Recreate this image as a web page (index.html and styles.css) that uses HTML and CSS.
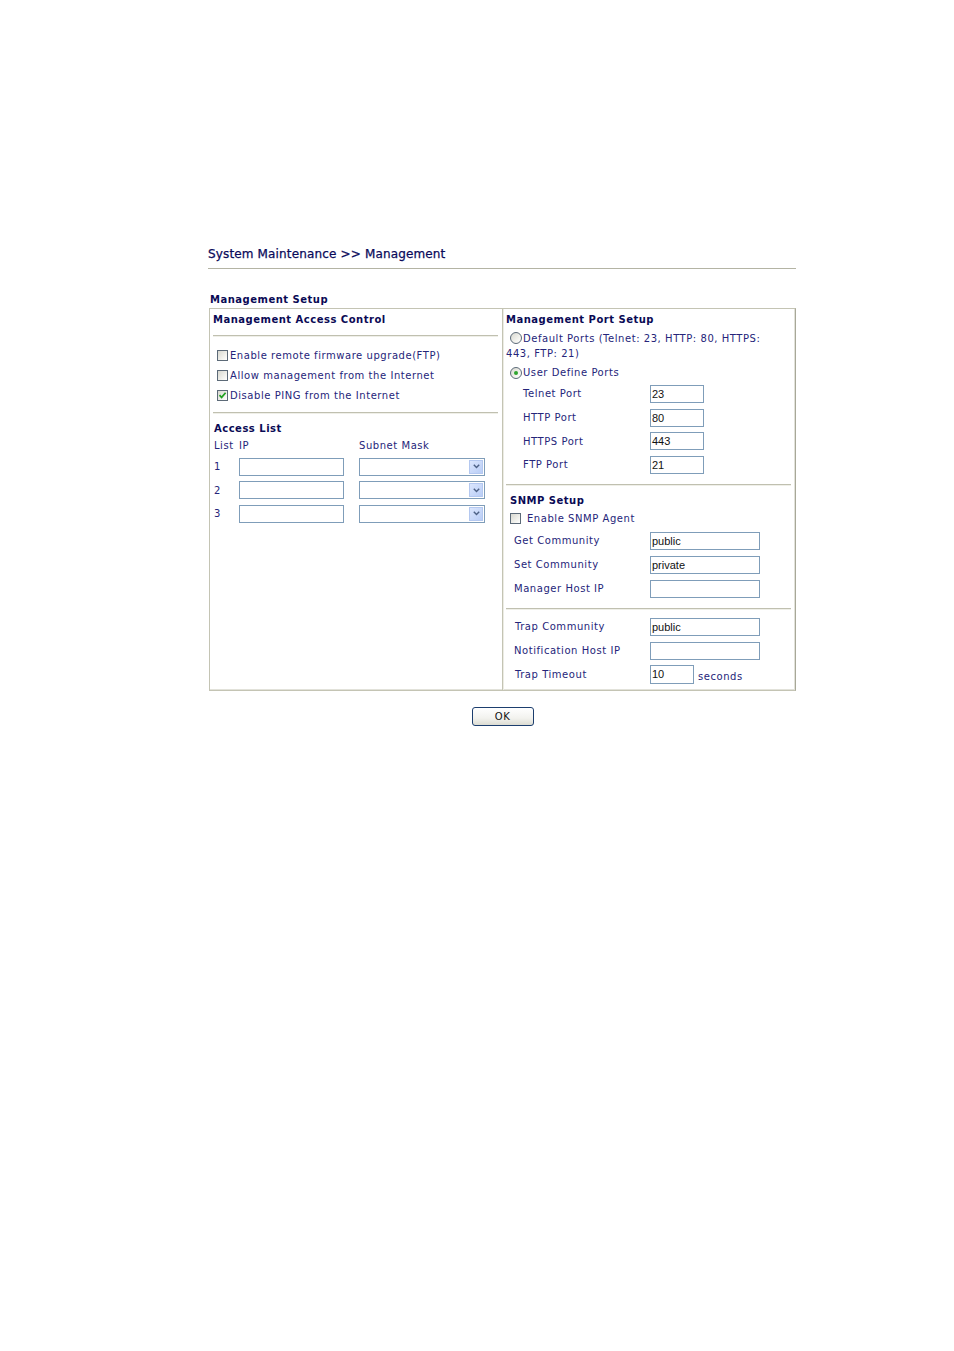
FILE: index.html
```html
<!DOCTYPE html>
<html>
<head>
<meta charset="utf-8">
<link rel="stylesheet" href="styles.css">
</head>
<body>
<div class="page">
  <div class="title">System Maintenance &gt;&gt; Management</div>
  <div class="section-title">Management Setup</div>
  <div class="box">
    <div class="col left">
      <div class="head">Management Access Control</div>
      <div class="hr hr1"></div>
      <div class="checks">
        <label class="crow"><span class="cb"></span>Enable remote firmware upgrade(FTP)</label>
        <label class="crow"><span class="cb"></span>Allow management from the Internet</label>
        <label class="crow"><span class="cb checked"><svg viewBox="0 0 9 9" width="9" height="9"><path d="M1.5 4.2 L3.6 6.4 L7.6 1.8" fill="none" stroke="#21a121" stroke-width="1.7"/></svg></span>Disable PING from the Internet</label>
      </div>
      <div class="hr hr2"></div>
      <div class="head al">Access List</div>
      <div class="alhead"><span class="c1">List</span><span class="c2">IP</span><span class="c3">Subnet Mask</span></div>
      <div class="alrow"><span class="c1">1</span><span class="inp ipw"></span><span class="sel"><span class="arr"><svg viewBox="0 0 7 5" width="7" height="5"><path d="M0.8 0.8 L3.5 3.6 L6.2 0.8" fill="none" stroke="#4d6185" stroke-width="1.4"/></svg></span></span></div>
      <div class="alrow"><span class="c1">2</span><span class="inp ipw"></span><span class="sel"><span class="arr"><svg viewBox="0 0 7 5" width="7" height="5"><path d="M0.8 0.8 L3.5 3.6 L6.2 0.8" fill="none" stroke="#4d6185" stroke-width="1.4"/></svg></span></span></div>
      <div class="alrow"><span class="c1">3</span><span class="inp ipw"></span><span class="sel"><span class="arr"><svg viewBox="0 0 7 5" width="7" height="5"><path d="M0.8 0.8 L3.5 3.6 L6.2 0.8" fill="none" stroke="#4d6185" stroke-width="1.4"/></svg></span></span></div>
    </div>
    <div class="col right">
      <div class="head">Management Port Setup</div>
      <div class="radio-text"><span class="rb"></span>Default Ports (Telnet: 23, HTTP: 80, HTTPS: 443, FTP: 21)</div>
      <div class="radio-row"><span class="rb on"><span class="dot"></span></span>User Define Ports</div>
      <div class="prow"><span class="plabel">Telnet Port</span><span class="inp pw">23</span></div>
      <div class="prow"><span class="plabel">HTTP Port</span><span class="inp pw">80</span></div>
      <div class="prow"><span class="plabel">HTTPS Port</span><span class="inp pw">443</span></div>
      <div class="prow"><span class="plabel">FTP Port</span><span class="inp pw">21</span></div>
      <div class="hr hr3"></div>
      <div class="head snmp">SNMP Setup</div>
      <label class="srow"><span class="cb"></span>Enable SNMP Agent</label>
      <div class="frow"><span class="flabel">Get Community</span><span class="inp fw">public</span></div>
      <div class="frow"><span class="flabel">Set Community</span><span class="inp fw">private</span></div>
      <div class="frow"><span class="flabel">Manager Host IP</span><span class="inp fw"></span></div>
      <div class="hr hr4"></div>
      <div class="frow t1"><span class="flabel tl">Trap Community</span><span class="inp fw">public</span></div>
      <div class="frow"><span class="flabel">Notification Host IP</span><span class="inp fw"></span></div>
      <div class="frow"><span class="flabel tl">Trap Timeout</span><span class="inp tw">10</span><span class="sec">seconds</span></div>
    </div>
  </div>
  <div class="btns"><button class="ok">OK</button></div>
</div>
</body>
</html>
```
FILE: styles.css
```css
html, body {
  margin: 0;
  padding: 0;
  background: #ffffff;
}
body {
  font-family: "DejaVu Sans", Verdana, sans-serif;
  font-size: 10px;
  letter-spacing: 0.55px;
  color: #25257a;
}
.page {
  margin-left: 208px;
  padding-top: 247px;
  width: 588px;
}
.title {
  font-size: 12px;
  line-height: 15px;
  letter-spacing: 0.15px;
  color: #0a0a5a;
  padding-bottom: 6px;
  border-bottom: 1px solid #b4b4a4;
  -webkit-text-stroke: 0.25px #0a0a5a;
}
.section-title {
  margin-top: 23px;
  padding-left: 2px;
  font-weight: bold;
  letter-spacing: 0.5px;
  line-height: 16px;
  color: #0a0a55;
}
.box {
  margin-left: 1px;
  width: 587px;
  height: 383px;
  box-sizing: border-box;
  border: 1px solid #c4c4b4;
  border-right-color: #a8a898;
  box-shadow: inset -1px -1px 0 #e2e2da;
  display: grid;
  grid-template-columns: 293px 1fr;
}
.col {
  padding-top: 3px;
}
.left {
  padding-left: 3px;
  padding-right: 4px;
  border-right: 1px solid #c4c4b4;
}
.right {
  padding-left: 3px;
  padding-right: 4px;
  box-shadow: inset 1px 0 0 #ecece4;
}
.head {
  font-weight: bold;
  letter-spacing: 0.5px;
  line-height: 16px;
  color: #0a0a55;
}
.hr {
  height: 1px;
  background: #c0c0b0;
  box-shadow: 0 1px 0 #efefe8;
}
.hr1 { margin-top: 7px; }
.checks { margin-top: 9px; padding-left: 4px; }
.crow {
  display: flex;
  align-items: center;
  height: 20px;
}
.cb {
  display: inline-flex;
  align-items: center;
  justify-content: center;
  flex: none;
  width: 11px;
  height: 11px;
  box-sizing: border-box;
  border: 1px solid #5c6a78;
  background: linear-gradient(135deg, #d8d8d0 0%, #f4f4f0 70%, #ffffff 100%);
  margin-right: 2px;
}
.hr2 { margin-top: 7px; }
.al { margin-top: 8px; line-height: 16px; padding-left: 1px; }
.alhead {
  display: flex;
  line-height: 17px;
  padding-left: 1px;
}
.c1 { width: 25px; }
.c2 { width: 120px; }
.alrow {
  display: flex;
  align-items: center;
  height: 23.5px;
  padding-left: 1px;
}
.alhead + .alrow { margin-top: 1px; }
.inp {
  display: inline-block;
  flex: none;
  box-sizing: border-box;
  height: 18px;
  border: 1px solid #7f9db9;
  background: #fff;
  font-family: "Liberation Sans", Arial, sans-serif;
  font-size: 11px;
  letter-spacing: 0;
  line-height: 16px;
  color: #111;
  padding-left: 1px;
}
.ipw { width: 105px; }
.sel {
  margin-left: 15px;
  width: 126px;
  height: 18px;
  box-sizing: border-box;
  border: 1px solid #7f9db9;
  background: #fff;
  display: flex;
  justify-content: flex-end;
  align-items: center;
  padding-right: 1px;
}
.arr {
  width: 14px;
  height: 14px;
  box-sizing: border-box;
  border: 1px solid #b4c8f0;
  background: linear-gradient(135deg, #dbe6fd 0%, #b9cdf6 100%);
  display: flex;
  align-items: center;
  justify-content: center;
}
.radio-text {
  margin-top: 3px;
  padding-right: 14px;
  line-height: 15px;
}
.rb {
  display: inline-flex;
  align-items: center;
  justify-content: center;
  flex: none;
  vertical-align: -2px;
  width: 12px;
  height: 12px;
  box-sizing: border-box;
  border: 1px solid #5c6a78;
  border-radius: 50%;
  background: linear-gradient(135deg, #d8d8d0 0%, #f6f6f2 70%, #ffffff 100%);
  margin-left: 4px;
  margin-right: 1px;
}
.rb .dot {
  width: 4px;
  height: 4px;
  border-radius: 50%;
  background: #2fa52f;
}
.radio-row {
  display: flex;
  align-items: center;
  margin-top: 4px;
  height: 15px;
  line-height: 15px;
}
.prow {
  display: flex;
  align-items: center;
  height: 23.7px;
  padding-left: 17px;
}
.radio-row + .prow { margin-top: 2px; }
.plabel { width: 127px; }
.pw { width: 54px; }
.hr3 { margin-top: 7px; }
.snmp { margin-top: 8px; padding-left: 4px; }
.srow {
  display: flex;
  align-items: center;
  height: 19px;
  padding-left: 4px;
}
.srow .cb { margin-right: 6px; }
.frow {
  display: flex;
  align-items: center;
  height: 24px;
  padding-left: 8px;
}
.srow + .frow { margin-top: 1px; }
.flabel { width: 136px; }
.flabel.tl { padding-left: 1px; width: 135px; }
.fw { width: 110px; }
.tw { width: 44px; height: 19px; }
.sec { margin-left: 4px; padding-top: 3px; }
.hr4 { margin-top: 7px; }
.t1 { margin-top: 6px; }
.btns {
  display: flex;
  justify-content: center;
  margin-top: 16px;
  padding-left: 1px;
}
.ok {
  width: 62px;
  height: 19px;
  box-sizing: border-box;
  border: 1px solid #1c3e6e;
  border-radius: 3px;
  background: linear-gradient(180deg, #ffffff 0%, #f2f2ee 60%, #dcdcd2 100%);
  font-family: "DejaVu Sans", Verdana, sans-serif;
  font-size: 10px;
  letter-spacing: 0.5px;
  color: #111;
  padding: 0;
}
```
